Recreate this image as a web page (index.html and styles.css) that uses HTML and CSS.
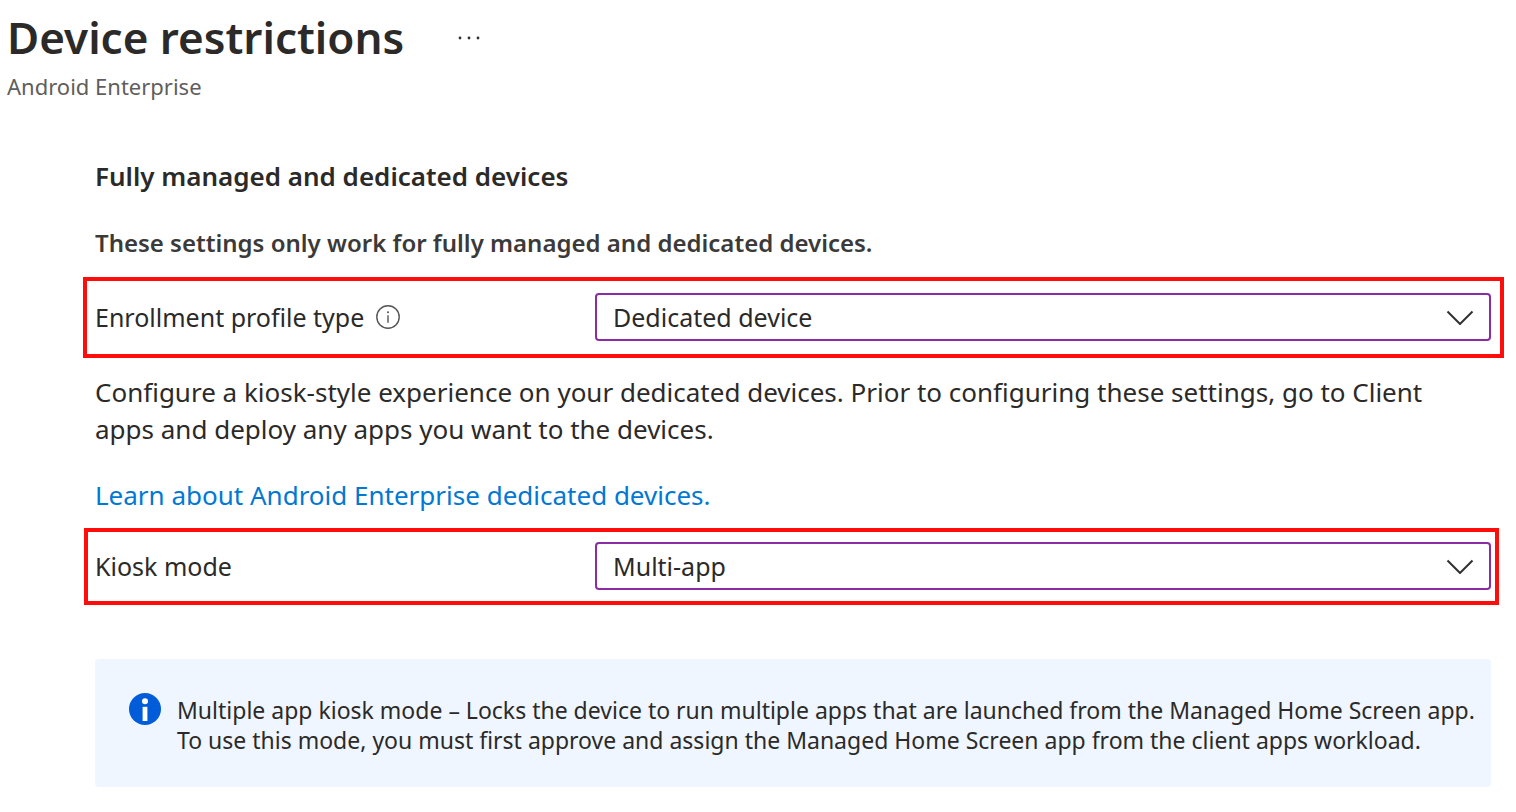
FILE: index.html
```html
<!DOCTYPE html>
<html lang="en">
<head>
<meta charset="utf-8">
<title>Device restrictions</title>
<link rel="stylesheet" href="styles.css">
</head>
<body>
<header class="page-header">
  <div class="title-row">
    <h1 class="title">Device restrictions</h1>
    <button class="more" type="button" aria-label="More options">
      <svg width="24" height="4" viewBox="0 0 24 4"><g fill="#323130"><circle cx="3" cy="2" r="1.4"/><circle cx="12" cy="2" r="1.4"/><circle cx="21" cy="2" r="1.4"/></g></svg>
    </button>
  </div>
  <p class="subtitle">Android Enterprise</p>
</header>
<main class="content">
  <h2 class="section-title">Fully managed and dedicated devices</h2>
  <p class="section-note">These settings only work for fully managed and dedicated devices.</p>
  <div class="field field-profile">
    <div class="field-label">
      <label for="profile">Enrollment profile type</label>
      <svg class="hint" width="24" height="24" viewBox="0 0 24 24" fill="none" stroke="#555"><circle cx="12" cy="12" r="11.2" stroke-width="1.4"/><path d="M12 10.300v7.500" stroke-width="1.4"/><circle cx="12" cy="7.300" r="1" fill="#555" stroke="none"/></svg>
    </div>
    <div class="select-wrap">
      <select id="profile" class="select"><option>Dedicated device</option></select>
      <svg class="chevron" width="28" height="16" viewBox="0 0 28 16" fill="none" stroke="#323130" stroke-width="2"><path d="M1.500 2.500 14 15 26.500 2.500"/></svg>
    </div>
  </div>
  <p class="description">Configure a kiosk-style experience on your dedicated devices. Prior to configuring these settings, go to Client apps and deploy any apps you want to the devices.</p>
  <p class="learn"><a class="link" href="#learn">Learn about Android Enterprise dedicated devices.</a></p>
  <div class="field field-kiosk">
    <div class="field-label"><label for="kiosk">Kiosk mode</label></div>
    <div class="select-wrap">
      <select id="kiosk" class="select"><option>Multi-app</option></select>
      <svg class="chevron" width="28" height="16" viewBox="0 0 28 16" fill="none" stroke="#323130" stroke-width="2"><path d="M1.500 2.500 14 15 26.500 2.500"/></svg>
    </div>
  </div>
  <aside class="info">
    <svg class="info-icon" width="32" height="32" viewBox="0 0 32 32"><circle cx="16" cy="16" r="16" fill="#015cda"/><circle cx="16" cy="8.300" r="3" fill="#fff"/><path d="M13.600 13.800h4.800v14.200h-4.800z" fill="#fff"/></svg>
    <p class="info-text">Multiple app kiosk mode – Locks the device to run multiple apps that are launched from the Managed Home Screen app. To use this mode, you must first approve and assign the Managed Home Screen app from the client apps workload.</p>
  </aside>
</main>
</body>
</html>
```
FILE: styles.css
```css
* { box-sizing: border-box; }
body {
  margin: 0;
  background: #fff;
  color: #2b2a29;
  font-family: "Noto Sans", "Open Sans", sans-serif;
  font-size: 25px;
}
h1, h2, p { margin: 0; }
.page-header { padding: 7px 7px 0; }
.title-row { display: flex; align-items: center; gap: 53px; }
.title { font-size: 44px; line-height: 61px; font-weight: 600; }
.more { display: flex; padding: 0; border: 0; background: none; }
.subtitle { font-size: 22px; line-height: 36px; color: #605e5c; }
.content { padding: 54px 25px 24px 95px; }
.section-title { font-size: 26px; line-height: 36px; font-weight: 600; }
.section-note { margin-top: 31px; font-size: 24px; line-height: 36px; font-weight: 600; color: #3b3a39; }
.field {
  display: flex;
  align-items: center;
  border: 4px solid #fe0d0b;
}
.field-profile { margin: 16px -13px 0 -12px; padding: 12px 9px 13px 8px; }
.field-kiosk { margin: 14px -8px 0 -11px; padding: 10px 4px 11px 7px; }
.field-label { display: flex; align-items: center; gap: 12px; width: 500px; flex: none; }
.select-wrap { display: grid; flex: 1; align-items: center; }
.select {
  grid-area: 1 / 1;
  width: 100%;
  height: 48px;
  padding: 0 16px;
  border: 2px solid #8a2da5;
  border-radius: 4px;
  background: #fff;
  color: inherit;
  font: inherit;
  appearance: none;
}
.chevron { grid-area: 1 / 1; justify-self: end; margin-right: 17px; pointer-events: none; }
.description { margin-top: 16px; padding-right: 24px; font-size: 26px; line-height: 37px; }
.learn { margin-top: 29px; font-size: 26px; line-height: 37px; }
.link { color: #0078d4; text-decoration: none; }
.info {
  display: flex;
  gap: 16px;
  margin-top: 54px;
  padding: 34px 8px 32px 34px;
  border-radius: 4px;
  background: #eff6ff;
}
.info-icon { flex: none; }
.info-text { padding-top: 2px; font-size: 23px; line-height: 30px; }
```
